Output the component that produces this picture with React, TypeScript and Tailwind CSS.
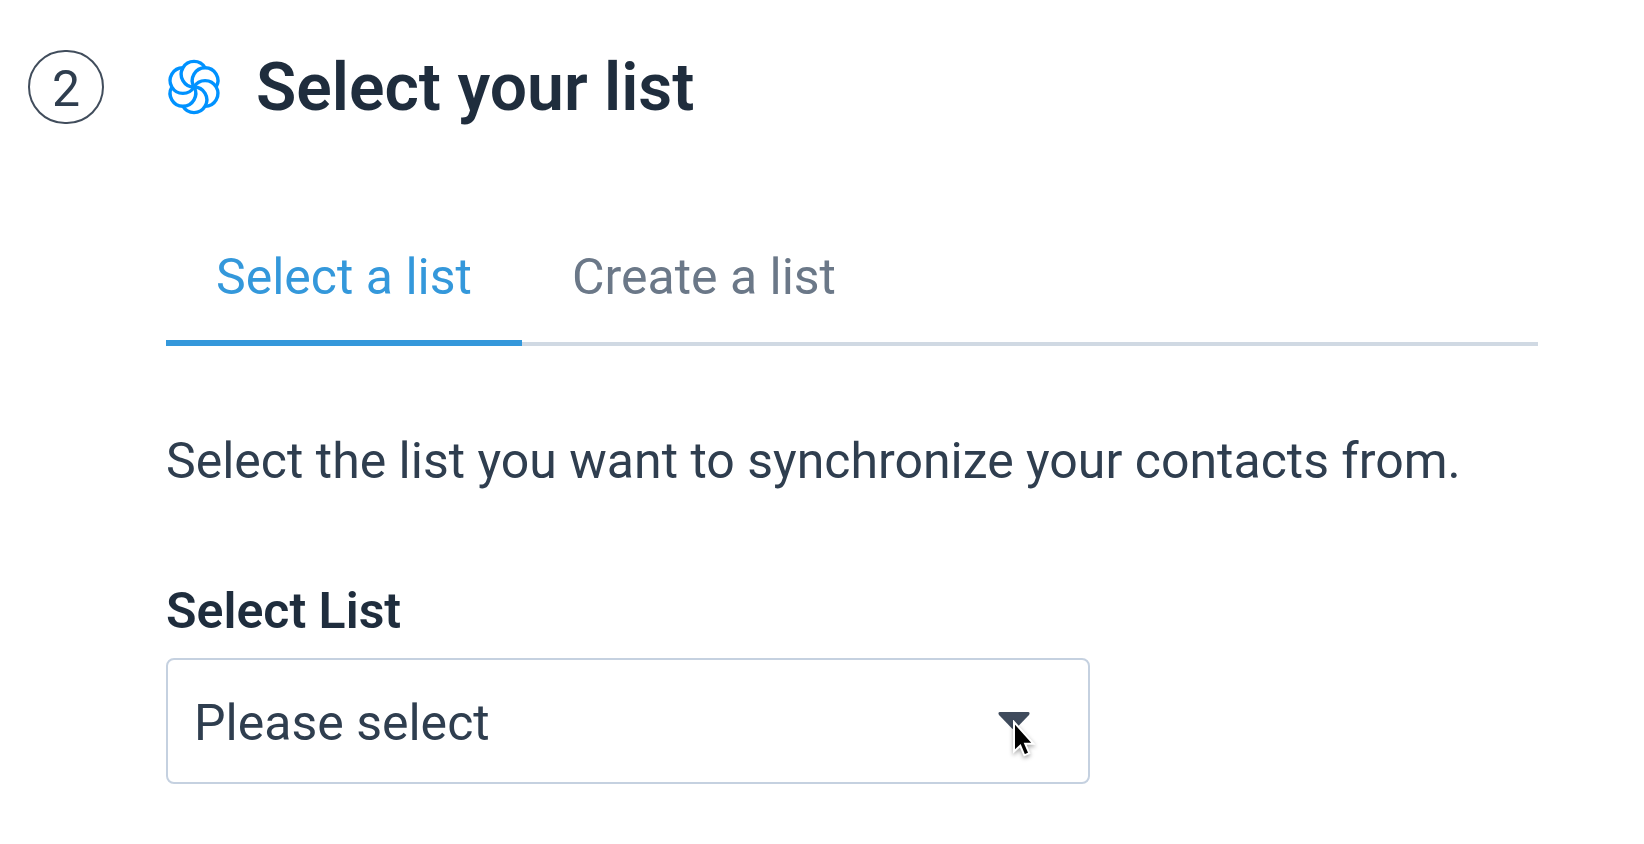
import { useState } from "react";

const petals = [0, 60, 120, 180, 240, 300];

function Logo() {
  return (
    <svg viewBox="-28 -28 56 56" className="size-14 shrink-0" fill="none" stroke="#0092ff" strokeWidth="3.4" aria-hidden="true">
      {petals.map((angle) => (
        <path key={angle} d="M0 0A12.8 12.8 0 1 1 11.09 -19.2" transform={`rotate(${angle})`} />
      ))}
    </svg>
  );
}

function Cursor() {
  return (
    <svg
      viewBox="0 0 28 42"
      className="pointer-events-none absolute top-[62px] right-[50px] h-[42px] w-7 drop-shadow-[0_2px_2px_rgba(0,0,0,0.35)]"
      aria-hidden="true"
    >
      <path d="M2 2V31.500L8.300 25.800L12.300 35.300L17.300 33.200L13.200 23.800H21.500Z" fill="#000" stroke="#fff" strokeWidth="2" />
    </svg>
  );
}

const tabs = ["Select a list", "Create a list"];

export default function App() {
  const [active, setActive] = useState(0);
  return (
    <main className="flex min-h-screen items-start gap-[62px] bg-white pt-[50px] pr-[106px] pb-[59px] pl-7 font-['Roboto',sans-serif] text-[50px] leading-[60px] font-normal text-[#2f3e4f]">
      <div className="flex h-[74px] w-[76px] shrink-0 items-center justify-center rounded-full border-2 border-[#414d5c] pt-1">2</div>
      <section className="min-w-0 flex-1">
        <header className="flex h-[74px] items-center gap-[34px]">
          <Logo />
          <h1 className="pt-0.5 text-[66px] leading-[74px] font-semibold text-[#1f2d3d]">Select your list</h1>
        </header>

        <div role="tablist" className="mt-[82px] flex border-b-4 border-[#d0d9e3]">
          {tabs.map((tab, i) => (
            <button
              key={tab}
              type="button"
              role="tab"
              aria-selected={active === i}
              onClick={() => setActive(i)}
              className={
                active === i
                  ? "-mb-1 border-b-6 border-[#3498db] px-[50px] pt-[41px] pb-[33px] text-[#3498db]"
                  : "-mb-1 border-b-6 border-transparent px-[50px] pt-[41px] pb-[33px] text-[#6b7888]"
              }
            >
              {tab}
            </button>
          ))}
        </div>

        <p className="mt-[85px]">Select the list you want to synchronize your contacts from.</p>

        <label htmlFor="list" className="mt-[90px] block font-semibold text-[#1f2d3d]">
          Select List
        </label>
        <div className="relative mt-[17px] w-full max-w-[924px]">
          <select
            id="list"
            className="block h-[126px] w-full appearance-none rounded-lg border-2 border-[#c5d1e0] bg-white pt-1 pr-28 pl-[26px] outline-none"
          >
            <option>Please select</option>
          </select>
          <svg viewBox="0 0 32 20" className="pointer-events-none absolute top-[53px] right-[60px] h-5 w-8" fill="#3f4b5c" aria-hidden="true">
            <path d="M2 1H30Q32.500 1 31 4L18 17.500Q16 19 14 17.500L1 4Q-0.500 1 2 1Z" />
          </svg>
          <Cursor />
        </div>
      </section>
    </main>
  );
}
